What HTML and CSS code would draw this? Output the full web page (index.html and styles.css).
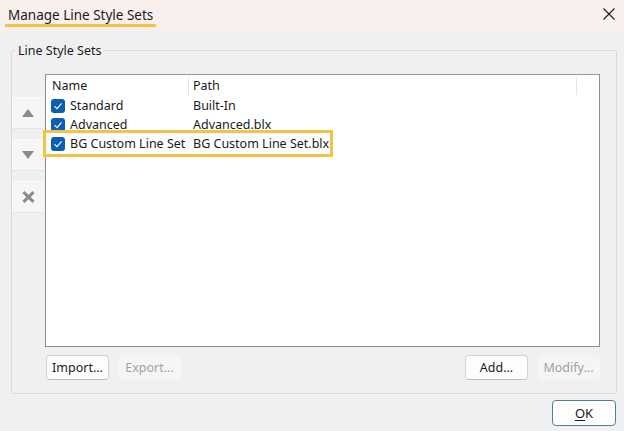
FILE: index.html
```html
<!DOCTYPE html>
<html lang="en">
<head>
    <meta charset="UTF-8">
    <title>Manage Line Style Sets</title>
    <link rel="stylesheet" href="styles.css">
</head>
<body>

<div class="titlebar">
    <span class="title">Manage Line Style Sets</span>
    <svg class="close" width="12" height="12" viewBox="0 0 12 12">
        <path d="M0.5 0.5 L11.5 11.5 M11.5 0.5 L0.5 11.5" stroke="#1a1a1a" stroke-width="1.1" fill="none"/>
    </svg>
</div>

<fieldset class="group">
    <legend>Line Style Sets</legend>

    <div class="group-body">
        <!-- move up / down / remove -->
        <div class="side">
            <div class="side-btn">
                <svg width="12" height="8" viewBox="0 0 12 8"><path d="M6 0 L12 8 L0 8 Z" fill="#8a8a8a"/></svg>
            </div>
            <div class="side-btn">
                <svg width="12" height="8" viewBox="0 0 12 8"><path d="M0 0 L12 0 L6 8 Z" fill="#8a8a8a"/></svg>
            </div>
            <div class="side-btn">
                <svg width="13" height="12" viewBox="0 0 13 12"><path d="M1.5 1.2 L11.5 10.8 M11.5 1.2 L1.5 10.8" stroke="#8a8a8a" stroke-width="3" fill="none"/></svg>
            </div>
        </div>

        <div class="main">
            <div class="list">
                <div class="list-head">
                    <div class="col-name">Name</div>
                    <div class="col-path">Path</div>
                    <div class="col-rest"></div>
                </div>

                <div class="row">
                    <div class="col-name"><span class="check"><svg width="14" height="14" viewBox="0 0 14 14"><path d="M3.5 7.2 L6 9.6 L10.6 4.4" stroke="#fff" stroke-width="1.1" fill="none"/></svg></span>Standard</div>
                    <div class="col-path">Built-In</div>
                </div>
                <div class="row">
                    <div class="col-name"><span class="check"><svg width="14" height="14" viewBox="0 0 14 14"><path d="M3.5 7.2 L6 9.6 L10.6 4.4" stroke="#fff" stroke-width="1.1" fill="none"/></svg></span>Advanced</div>
                    <div class="col-path">Advanced.blx</div>
                </div>
                <div class="row marked">
                    <div class="col-name"><span class="check"><svg width="14" height="14" viewBox="0 0 14 14"><path d="M3.5 7.2 L6 9.6 L10.6 4.4" stroke="#fff" stroke-width="1.1" fill="none"/></svg></span>BG Custom Line Set</div>
                    <div class="col-path">BG Custom Line Set.blx</div>
                    <div class="highlight"></div>
                </div>
            </div>

            <div class="buttons">
                <div class="btn-pair">
                    <button class="btn">Import...</button>
                    <button class="btn" disabled>Export...</button>
                </div>
                <div class="btn-pair">
                    <button class="btn">Add...</button>
                    <button class="btn" disabled>Modify...</button>
                </div>
            </div>
        </div>
    </div>
</fieldset>

<div class="footer">
    <button class="btn ok"><u>O</u>K</button>
</div>

</body>
</html>
```

FILE: styles.css
```css
body {
    margin: 0;
    width: 624px;
    height: 431px;
    background: #f0f0f0;
    font-family: "Noto Sans", sans-serif;
    font-size: 12.5px;
    color: #1a1a1a;
    overflow: hidden;
}
.titlebar {
    height: 31px;
    background: #f9efed;
    display: flex;
    align-items: center;
    justify-content: space-between;
    padding: 0 9px 0 5px;
}
.title {
    font-size: 13.5px;
    line-height: 17px;
    padding: 1px 3px 0;
    border-bottom: 3px solid #f3c344;
    margin-top: 1px;
}
.close {
    margin-top: -3px;
}
.group {
    margin: 11px 7px 0 11px;
    padding: 0 16px 13px 0;
    border: 1px solid #dadada;
    border-radius: 2px;
}
.group legend {
    margin-left: 3px;
    padding: 0 3px;
    line-height: 17px;
    font-size: 12.5px;
}
.group-body {
    display: flex;
    padding-top: 15px;
}
.side {
    width: 32px;
    padding-top: 23px;
    display: flex;
    flex-direction: column;
    gap: 10px;
}
.side-btn {
    box-sizing: border-box;
    height: 32px;
    background: #f6f6f6;
    border-top: 1px solid #fafafa;
    border-bottom: 1px solid #e6e6e6;
    display: flex;
    align-items: center;
    justify-content: center;
}
.main {
    flex: 1;
    margin-left: 1px;
}
.list {
    height: 271px;
    background: #fff;
    border: 1px solid #8e8e8e;
    border-top-color: #9a9a9a;
}
.list-head,
.row {
    display: flex;
    height: 19px;
    align-items: center;
}
.list-head {
    height: 20px;
    margin-top: 1px;
}
.list-head .col-name,
.list-head .col-path {
    border-right: 1px solid #e4e4e4;
    height: 18px;
    line-height: 18px;
}
.col-name {
    width: 136px;
    padding-left: 6px;
    display: flex;
    align-items: center;
}
.col-path {
    width: 383px;
    padding-left: 4px;
}
.row .col-name {
    padding-left: 5px;
    width: 137px;
}
.row .col-path {
    padding-left: 5px;
}
.check {
    width: 14px;
    height: 14px;
    background: #0b5fb0;
    border-radius: 3px;
    margin-right: 5px;
    display: flex;
}
.marked {
    position: relative;
}
.highlight {
    position: absolute;
    left: -3px;
    top: -4px;
    width: 284px;
    height: 21px;
    border: 3px solid #f3c344;
}
.buttons {
    display: flex;
    justify-content: space-between;
    margin-top: 8px;
    padding-left: 1px;
}
.btn-pair {
    display: flex;
    gap: 9px;
}
.btn {
    width: 63px;
    height: 25px;
    font-family: "Noto Sans", sans-serif;
    font-size: 12.5px;
    color: #1a1a1a;
    background: #fdfdfd;
    border: 1px solid #d2d2d2;
    border-bottom-color: #bdbdbd;
    border-radius: 4px;
    padding: 0;
}
.btn:disabled {
    background: #f5f5f5;
    border-color: #f5f5f5;
    color: #a2a2a2;
}
.footer {
    display: flex;
    justify-content: flex-end;
    padding: 6px 8px 0 0;
}
.ok {
    width: 64px;
    height: 26px;
    border: 1px solid #4f7f9b;
    font-size: 13px;
}
.ok u {
    text-underline-offset: 2px;
}
```
